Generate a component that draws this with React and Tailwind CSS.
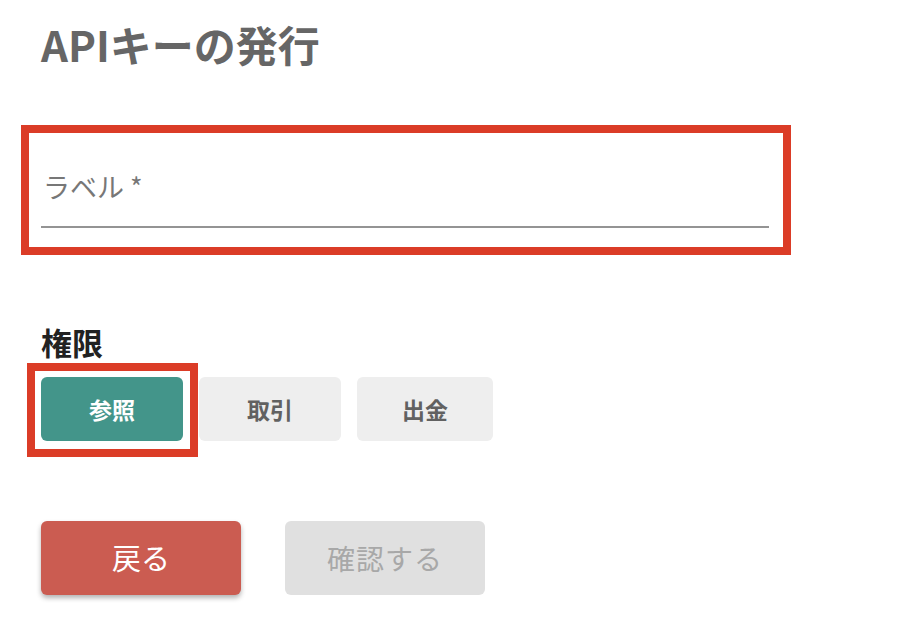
const font = { fontFamily: '"Noto Sans CJK JP", "Noto Sans", sans-serif' };

function PermissionButton({ label, active, width }) {
  return (
    <button
      type="button"
      className={
        "h-[64px] rounded-[6px] text-[23px] font-bold " +
        width +
        (active ? " bg-[#43958a] text-white" : " bg-[#eeeeee] text-[#616161]")
      }
    >
      {label}
    </button>
  );
}

export default function App() {
  return (
    <div className="min-h-screen bg-white pl-[21px]" style={font}>
      <h1 className="ml-[20px] mt-[23px] h-[42px] text-[42px] leading-[42px] font-bold text-[#666666]">
        APIキーの発行
      </h1>

      {/* label field, highlighted */}
      <div className="mt-[60px] w-[770px] border-[8px] border-[#db3c27] pl-[12px] pr-[14px] pt-[39px] pb-[19px]">
        <div className="h-[30px] pl-[2px] text-[27px] leading-[30px] text-[#777777]">
          ラベル *
        </div>
        <div className="mt-[24px] h-[2px] bg-[#949494]"></div>
      </div>

      <div className="ml-[20px] mt-[73px] h-[28px] text-[31px] leading-[28px] font-bold text-[#222222]">
        権限
      </div>

      <div className="ml-[20px] mt-[21px] flex gap-[16px]">
        <div className="relative">
          <PermissionButton label="参照" active width="w-[142px]" />
          <div className="pointer-events-none absolute -left-[14px] -top-[14px] -right-[15px] -bottom-[16px] border-[8px] border-[#db3c27]"></div>
        </div>
        <PermissionButton label="取引" width="w-[142px]" />
        <PermissionButton label="出金" width="w-[136px]" />
      </div>

      <div className="ml-[20px] mt-[80px] flex gap-[44px]">
        <button
          type="button"
          className="h-[74px] w-[200px] rounded-[6px] bg-[#cb5c51] text-[29px] text-white shadow-[0_3px_5px_rgba(0,0,0,0.3)]"
        >
          戻る
        </button>
        <button
          type="button"
          disabled
          className="h-[74px] w-[200px] rounded-[6px] bg-[#e0e0e0] text-[28px] tracking-[1px] text-[#a8a8a8]"
        >
          確認する
        </button>
      </div>
    </div>
  );
}
